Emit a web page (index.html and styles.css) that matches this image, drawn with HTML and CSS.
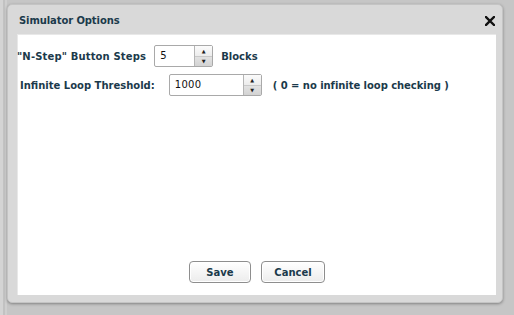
FILE: index.html
```html
<!DOCTYPE html>
<html>
<head>
<meta charset="utf-8">
<link rel="stylesheet" href="styles.css">
</head>
<body>
<div class="dialog">
  <div class="titlebar">
    <span class="title">Simulator Options</span>
    <svg class="close" width="10" height="10" viewBox="0 0 10 10"><path d="M1 1 L9 9 M9 1 L1 9" stroke="#111" stroke-width="2.4" stroke-linecap="square"/></svg>
  </div>
  <div class="content">
    <div class="row row1">
      <span class="label">"N-Step" Button Steps</span>
      <div class="spin w1"><span class="val">5</span><div class="arrows"><span class="up">&#9650;</span><span class="down">&#9660;</span></div></div>
      <span class="label after">Blocks</span>
    </div>
    <div class="row row2">
      <span class="label">Infinite Loop Threshold:</span>
      <div class="spin w2"><span class="val">1000</span><div class="arrows"><span class="up">&#9650;</span><span class="down">&#9660;</span></div></div>
      <span class="label note">( 0 = no infinite loop checking )</span>
    </div>
    <div class="spacer"></div>
    <div class="buttons">
      <button class="btn save">Save</button>
      <button class="btn cancel">Cancel</button>
    </div>
  </div>
</div>
</body>
</html>
```
FILE: styles.css
```css
html, body {
  margin: 0;
  padding: 0;
}
body {
  width: 514px;
  height: 315px;
  overflow: hidden;
  background: #c6c6c6;
  background-image:
    linear-gradient(90deg, #d4d4d4 0, #d4d4d4 3px, #c2c2c2 3px, #c2c2c2 5px, #cfcfcf 5px, #cfcfcf 7px, transparent 7px);
  font-family: "DejaVu Sans", Verdana, sans-serif;
  color: #1b3a4b;
  padding-top: 4px;
  padding-left: 7px;
  box-sizing: border-box;
}
.dialog {
  width: 496px;
  height: 299px;
  box-sizing: border-box;
  background: #d9d9d9;
  border: 1px solid #c4c4c4;
  border-radius: 5px;
  box-shadow: 0 1px 3px rgba(0,0,0,0.35);
  padding: 0 6px 7px 9px;
  display: flex;
  flex-direction: column;
}
.titlebar {
  height: 29px;
  display: flex;
  align-items: center;
  justify-content: space-between;
  flex: none;
}
.title {
  font-weight: bold;
  font-size: 10px;
  margin-left: 2px;
  margin-top: 1px;
  letter-spacing: -0.1px;
}
.close {
  display: block;
  margin-right: 1px;
  margin-top: 3px;
}
.content {
  flex: 1;
  background: #fff;
  display: flex;
  flex-direction: column;
  box-shadow: inset 1px 1px 0 #e8e8e8;
}
.row {
  display: flex;
  align-items: center;
  height: 22px;
}
.row1 {
  margin-top: 11px;
}
.row2 {
  margin-top: 7px;
  padding-left: 3px;
}
.label {
  font-weight: bold;
  font-size: 10px;
  white-space: nowrap;
}
.row1 .label:first-child {
  letter-spacing: 0.15px;
}
.after {
  margin-left: 8px;
}
.note {
  margin-left: 11px;
  letter-spacing: -0.05px;
}
.spin {
  height: 22px;
  box-sizing: border-box;
  border: 1px solid #a9a9a9;
  border-radius: 2px;
  display: flex;
  background: #fff;
}
.w1 {
  width: 59px;
  margin-left: 8px;
}
.w2 {
  width: 93px;
  margin-left: 14px;
}
.val {
  flex: 1;
  font-family: "DejaVu Sans", Verdana, sans-serif;
  font-size: 10px;
  color: #111;
  padding-left: 5px;
  line-height: 20px;
  letter-spacing: 0.3px;
}
.arrows {
  width: 17px;
  border-left: 1px solid #b5b5b5;
  display: flex;
  flex-direction: column;
}
.arrows span {
  flex: 1;
  display: flex;
  align-items: center;
  justify-content: center;
  font-size: 5px;
  color: #222;
}
.up {
  background: linear-gradient(#fbfbfb, #ececec);
  border-bottom: 1px solid #c9c9c9;
}
.down {
  background: linear-gradient(#e2e2e2, #d3d3d3);
}
.spacer {
  flex: 1;
}
.buttons {
  display: flex;
  justify-content: center;
  gap: 10px;
  margin-bottom: 12px;
  padding-left: 1px;
}
.btn {
  height: 22px;
  box-sizing: border-box;
  border: 1px solid #8e8e8e;
  border-radius: 4px;
  background: linear-gradient(#ffffff, #ececec);
  font-family: "DejaVu Sans", Verdana, sans-serif;
  font-weight: bold;
  font-size: 10px;
  color: #1b3a4b;
  padding: 0;
  box-shadow: inset 0 0 0 1px #fff;
}
.save {
  width: 62px;
}
.cancel {
  width: 64px;
}
```
